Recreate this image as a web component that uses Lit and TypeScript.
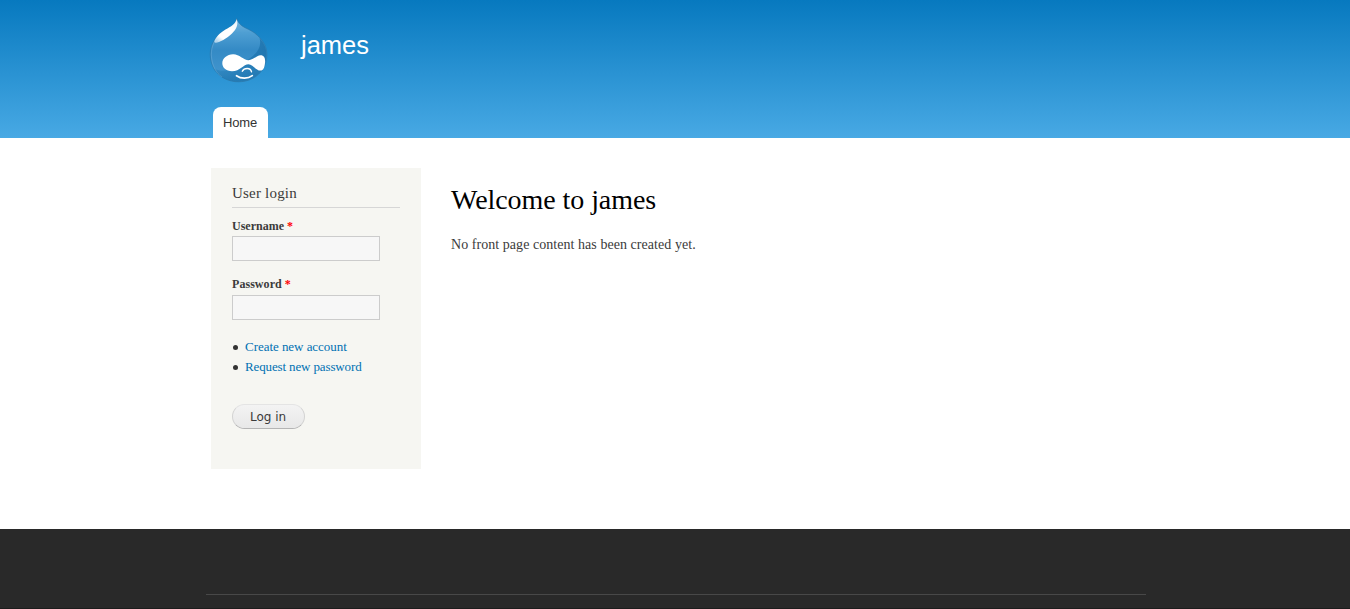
import { LitElement, html, css, svg } from "lit";
import { customElement } from "lit/decorators.js";

const logo = svg`
  <svg class="logo" viewBox="0 0 60 66" width="60" height="66" aria-label="Home">
    <defs>
      <linearGradient id="drop" x1="0" y1="0" x2="0" y2="1">
        <stop offset="0" stop-color="#7ab8e0"/>
        <stop offset=".22" stop-color="#4f9fd3"/>
        <stop offset=".5" stop-color="#348ac5"/>
        <stop offset=".8" stop-color="#3f93cc"/>
        <stop offset="1" stop-color="#2a80b8"/>
      </linearGradient>
      <linearGradient id="shade" x1="0" y1=".6" x2="1" y2=".4">
        <stop offset="0" stop-color="#1b75b0" stop-opacity=".3"/>
        <stop offset="1" stop-color="#1a70aa" stop-opacity=".75"/>
      </linearGradient>
      <linearGradient id="shine" x1=".9" y1="0" x2=".2" y2="1">
        <stop offset="0" stop-color="#fff" stop-opacity=".85"/>
        <stop offset=".4" stop-color="#fff"/>
        <stop offset=".8" stop-color="#fff"/>
        <stop offset="1" stop-color="#fff" stop-opacity=".6"/>
      </linearGradient>
    </defs>
    <path d="M27.700 .5C29 4.500 31 7 36 9.700C41 12 45 14 48.500 17.500C54.500 23 57.900 29 57.900 36.500C57.900 53 45 63.800 29.500 63.800C14 63.800 1.200 53 1.200 36C1.200 25 8 17 16 12C22 9 27 7 27.700 .5Z" fill="url(#drop)" stroke="#2c74a5" stroke-opacity=".65" stroke-width=".9"/>
    <path d="M50.500 20C55 25 57.500 30 57.500 36.500C57.500 53 45 63.500 29.500 63.500C17 63.500 8 58 4 50C12 55 22 53 31 46.500C43 40 54 32 50.500 20Z" fill="url(#shade)"/>
    <path d="M2.300 37C2.300 28 6 21 11 16.500M2.300 37C3 48 7 55 13 59" fill="none" stroke="#8fc3e4" stroke-opacity=".35" stroke-width=".9"/>
    <path d="M27.700 1C26.500 6 22 8.500 16.500 11.500C10.500 15 5.500 20.500 5.400 24C6.500 26.500 17 21.500 23 15.500C27.500 11 29.500 7 27.700 1Z" fill="url(#shine)"/>
    <path d="M24 36.300C30 36 34.500 42.200 39.500 42.200C44 42.200 48 37.300 51.500 37.300C55.500 37.300 56.500 41 56 45C55.600 49.500 54.200 52.600 51.500 52.600C47 52.600 43.500 46.200 39.500 46.200C34.500 46.200 31 53.200 23 53.200C17 53.200 13.300 49.700 13.300 45.300C13.300 40.500 18 36.600 24 36.300Z" fill="#fff"/>
    <path d="M33.300 53.200C35 49.900 41.500 49 42.500 53.900" fill="none" stroke="#fff" stroke-width="1.400" stroke-linecap="round"/>
    <path d="M27.500 57.700C32 60.900 39 60.900 43.300 57.600" fill="none" stroke="#fff" stroke-width="1.700" stroke-linecap="round"/>
  </svg>`;

@customElement("app-root")
export class AppRoot extends LitElement {
  static styles = css`
    :host {
      display: flex;
      flex-direction: column;
      height: 609px;
      overflow: hidden;
      background: #fff;
      color: #3b3b3b;
      font: 14px/21px "Liberation Serif", serif;
    }
    * { box-sizing: border-box; }
    h1, h2, p, ul, form { margin: 0; padding: 0; font-weight: normal; }
    a { color: #0071b3; text-decoration: none; }
    header {
      height: 138px;
      flex: none;
      background: linear-gradient(#0779bf, #48a9e4);
    }
    .header-inner {
      width: 940px;
      height: 138px;
      margin: 0 auto 0 206px;
      display: flex;
      flex-direction: column;
      justify-content: space-between;
      font-family: "Liberation Sans", sans-serif;
    }
    .brand { display: flex; padding: 18px 0 0 3px; }
    .logo { display: block; overflow: visible; }
    .site-name {
      margin: 11px 0 0 32px;
      color: #fff;
      font-size: 25.500px;
      line-height: 32px;
    }
    .tab {
      width: 55px;
      height: 31px;
      margin-left: 7px;
      border-radius: 8px 8px 0 0;
      background: #fff;
      color: #333;
      font-size: 13px;
      line-height: 32px;
      padding-left: 10px;
      letter-spacing: -0.150px;
    }
    .main {
      display: flex;
      gap: 30px;
      flex: none;
      height: 391px;
      padding: 30px 0 0 211px;
    }
    .block {
      width: 210px;
      height: 301px;
      padding: 15px 21px;
      background: #f6f6f2;
    }
    .block h2 {
      height: 25px;
      border-bottom: 1px solid #d6d6d6;
      font-size: 15px;
      line-height: 20px;
      letter-spacing: 0.200px;
    }
    label {
      display: block;
      height: 19px;
      font-size: 12px;
      font-weight: bold;
      line-height: 18px;
    }
    .required { color: #f00; }
    input {
      display: block;
      width: 148px;
      height: 25px;
      border: 1px solid #ccc;
      border-radius: 0;
      background: #f7f7f7;
      padding: 2px;
      outline: 0;
    }
    .field { height: 59px; padding-top: 9px; }
    .field + .field { padding-top: 8px; letter-spacing: 0.050px; }
    .field + .field label { height: 20px; }
    .links { list-style: none; margin-top: 11px; font-size: 13px; line-height: 20px; letter-spacing: -0.040px; }
    .links li { display: flex; align-items: center; gap: 8px; height: 20px; }
    .links li::before {
      content: "";
      width: 5px;
      height: 5px;
      margin-left: 1px;
      margin-right: -1px;
      border-radius: 50%;
      background: #333;
    }
    .links li + li { letter-spacing: -0.130px; }
    button {
      display: block;
      width: 73px;
      height: 25px;
      margin-top: 27px;
      padding: 1px 1px 0 0;
      border: 1px solid #e4e4e4;
      border-bottom-color: #b4b4b4;
      border-left-color: #d2d2d2;
      border-right-color: #d2d2d2;
      border-radius: 13px;
      background: linear-gradient(#f3f3f3, #e8e8e8);
      color: #3a3a3a;
      font: 12px/22px "DejaVu Sans", sans-serif;
    }
    .content h1 {
      padding-top: 15px;
      color: #000;
      font-size: 28px;
      line-height: 34px;
      letter-spacing: -0.060px;
    }
    .content p { margin-top: 17px; letter-spacing: 0.050px; }
    footer {
      flex: 1;
      padding: 65px 0 0 206px;
      background: #292929;
      border-bottom: 1px solid #1c1c1c;
    }
    .rule { width: 940px; height: 1px; background: #484848; }
  `;

  private field(id: string, label: string, type: string) {
    return html`<div class="field">
      <label for=${id}>${label} <span class="required">*</span></label>
      <input id=${id} type=${type} />
    </div>`;
  }

  render() {
    return html`
      <header>
        <div class="header-inner">
          <div class="brand">${logo}<div class="site-name">james</div></div>
          <nav class="tab">Home</nav>
        </div>
      </header>
      <div class="main">
        <aside class="block">
          <h2>User login</h2>
          <form>
            ${this.field("name", "Username", "text")}
            ${this.field("pass", "Password", "password")}
            <ul class="links">
              <li><a href="#">Create new account</a></li>
              <li><a href="#">Request new password</a></li>
            </ul>
            <button type="button">Log in</button>
          </form>
        </aside>
        <main class="content">
          <h1>Welcome to james</h1>
          <p>No front page content has been created yet.</p>
        </main>
      </div>
      <footer><div class="rule"></div></footer>
    `;
  }
}
